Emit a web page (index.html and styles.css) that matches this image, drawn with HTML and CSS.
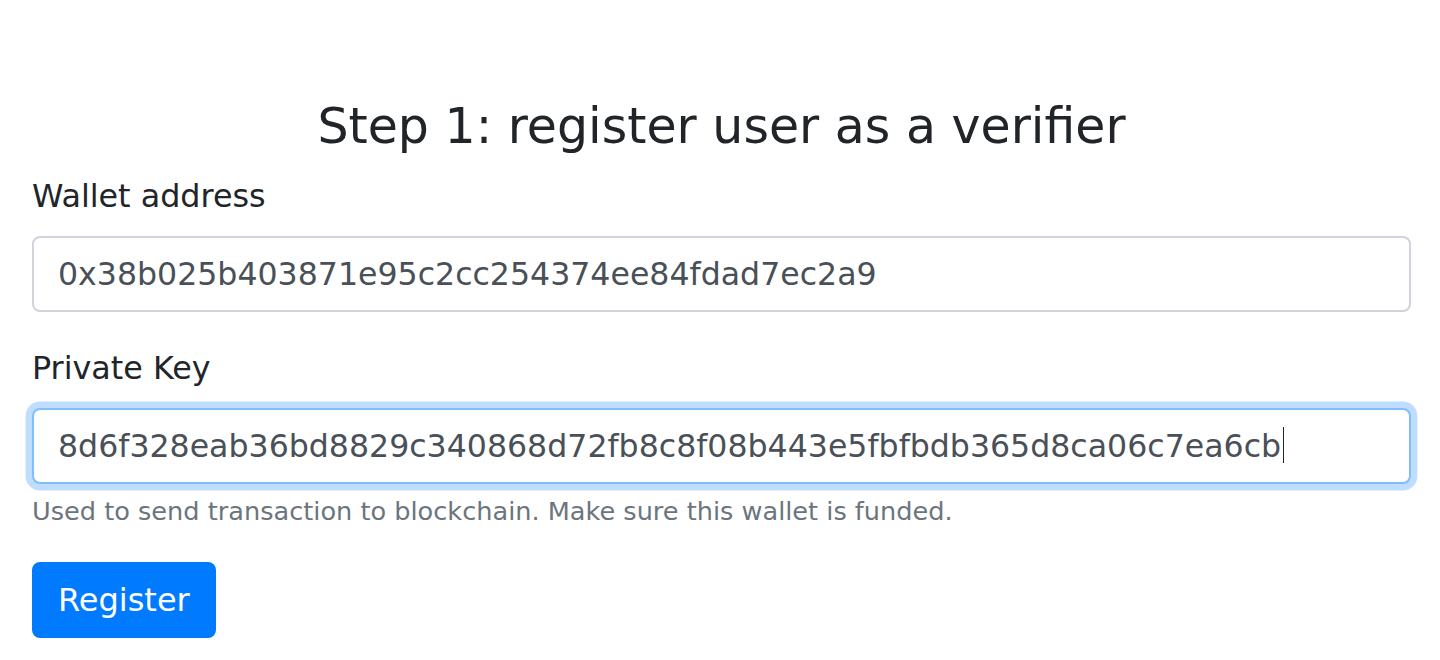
FILE: index.html
```html
<!DOCTYPE html>
<html lang="en">
<head>
<meta charset="utf-8">
<title>Register verifier</title>
<link rel="stylesheet" href="styles.css">
</head>
<body>
<main class="container">
  <h4 class="title">Step 1: register user as a verifier</h4>
  <form class="form">
    <div class="form-group">
      <label class="label" for="wallet">Wallet address</label>
      <div class="form-control" id="wallet" role="textbox">0x38b025b403871e95c2cc254374ee84fdad7ec2a9</div>
    </div>
    <div class="form-group">
      <label class="label" for="pkey">Private Key</label>
      <div class="form-control is-focused" id="pkey" role="textbox">8d6f328eab36bd8829c340868d72fb8c8f08b443e5fbfbdb365d8ca06c7ea6cb<span class="caret"></span></div>
      <small class="form-text">Used to send transaction to blockchain. Make sure this wallet is funded.</small>
    </div>
    <button type="button" class="btn">Register</button>
  </form>
</main>
</body>
</html>
```

FILE: styles.css
```css
html, body {
  margin: 0;
  padding: 0;
  background: #ffffff;
}

body {
  font-family: "DejaVu Sans", Verdana, sans-serif;
  font-size: 32px;
  line-height: 1.5;
  color: #212529;
}

.container {
  padding: 98px 29px 0 32px;
}

.title {
  margin: 0 0 16px;
  font-size: 49px;
  font-weight: 400;
  line-height: 57.6px;
  text-align: center;
  color: #212529;
}

.form {
  display: flex;
  flex-direction: column;
  align-items: flex-start;
}

.form-group {
  align-self: stretch;
  display: flex;
  flex-direction: column;
  margin-bottom: 32px;
}

.label {
  margin-bottom: 16px;
  font-size: 31.8px;
  line-height: 48px;
}

.form-control {
  height: 48px;
  padding: 12px 24px;
  border: 2px solid #ced4da;
  border-radius: 8px;
  font-size: 31.6px;
  line-height: 48px;
  color: #495057;
  background: #ffffff;
  white-space: nowrap;
  overflow: hidden;
}

.form-control.is-focused {
  border-color: #80bdff;
  box-shadow: 0 0 0 6.4px rgba(0, 123, 255, 0.25);
}

.caret {
  display: inline-block;
  width: 1px;
  height: 36px;
  margin-left: 2px;
  vertical-align: -6px;
  background: #212529;
}

.form-text {
  margin-top: 8px;
  font-size: 25.6px;
  line-height: 1.5;
  color: #6c757d;
}

.btn {
  padding: 12px 24px;
  border: 2px solid #007bff;
  border-radius: 8px;
  background: #007bff;
  color: #ffffff;
  font-family: "DejaVu Sans", Verdana, sans-serif;
  font-size: 32px;
  line-height: 48px;
  cursor: pointer;
}
```
